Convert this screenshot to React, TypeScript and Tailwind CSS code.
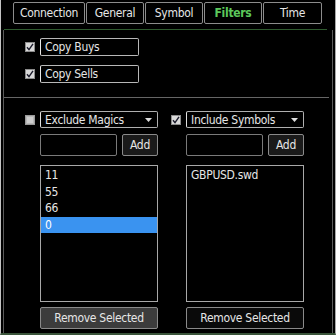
import React from 'react';

const tabs = [
  { label: 'Connection', w: 'w-[72px]' },
  { label: 'General', w: 'w-[58px]' },
  { label: 'Symbol', w: 'w-[58px]' },
  { label: 'Filters', w: 'w-[58px]', active: true },
  { label: 'Time', w: 'w-[59px]' },
];

function CheckBox({ checked }: { checked: boolean }) {
  return (
    <svg width="10" height="10" viewBox="0 0 10 10" className="shrink-0">
      <rect x="0" y="0" width="10" height="10" fill={checked ? '#d9d9d9' : '#b8b8b8'} />
      <rect x="0.5" y="0.5" width="9" height="9" fill="none" stroke={checked ? '#8c8c8c' : '#9a9a9a'} />
      {checked ? (
        <path d="M2 5.2 L4 7.6 L8 1.8" fill="none" stroke="#1a1a2a" strokeWidth="1.4" />
      ) : (
        <rect x="2" y="2" width="6" height="6" fill="#cfcfcf" />
      )}
    </svg>
  );
}

function Dropdown({ label }: { label: string }) {
  return (
    <div className="w-[118px] h-[17px] ml-[5px] border border-[#b0b0b0] border-l-[#e0e0e0] rounded-[2px] flex items-center justify-between pl-[4px] pr-[5px]">
      <span>{label}</span>
      <svg width="7" height="4" viewBox="0 0 7 4">
        <path d="M0 0 L7 0 L3.5 4 Z" fill="#dcdcdc" />
      </svg>
    </div>
  );
}

function FilterColumn({
  checked,
  label,
  items,
  selected,
  filledButton,
}: {
  checked: boolean;
  label: string;
  items: string[];
  selected?: number;
  filledButton?: boolean;
}) {
  return (
    <div className="flex flex-col w-[133px]">
      <div className="flex items-center">
        <CheckBox checked={checked} />
        <Dropdown label={label} />
      </div>
      <div className="pl-[15px] flex flex-col">
        <div className="flex gap-[5px] mt-[6px]">
          <div className="w-[77px] h-[22px] border border-[#7a7a7a] rounded-[2px]" />
          <div className="w-[36px] h-[22px] border border-[#8a8a8a] rounded-[2px] bg-[#1a1a1a] flex items-center justify-center">
            Add
          </div>
        </div>
        <div className="mt-[9px] h-[137px] w-[118px] border border-[#a8a8a8] pt-[1px]">
          {items.map((it, i) => (
            <div
              key={i}
              className={
                'h-[16.6px] flex items-center pl-[4px] ' +
                (i === selected ? 'bg-[#3a93f0] text-white' : '')
              }
            >
              {it}
            </div>
          ))}
        </div>
        <div
          className={
            'mt-[5px] h-[22px] w-[118px] border border-[#8a8a8a] rounded-[2px] flex items-center justify-center ' +
            (filledButton ? 'bg-[#3c3c3c]' : 'bg-[#0a0a0a]')
          }
        >
          Remove Selected
        </div>
      </div>
    </div>
  );
}

export default function App() {
  return (
    <div
      className="w-[336px] h-[335px] bg-black border-l border-r border-l-[#c4c4c4] border-r-[#a8a8a8] border-b-2 border-b-[#3a553a] flex flex-col text-[12px] leading-[16px] tracking-[-0.3px] font-stretch-condensed text-[#e6e6e6] overflow-hidden"
      style={{ fontFamily: '"DejaVu Sans", "Noto Sans", sans-serif' }}
    >
      {/* Tabs */}
      <div className="flex gap-px pt-[2px] pl-[12px]">
        {tabs.map((t) => (
          <div
            key={t.label}
            className={
              t.w +
              ' h-[22px] border border-[#8c8c8c] rounded-[2px] flex items-center justify-center ' +
              (t.active ? 'text-[#5cc85c] font-bold' : '')
            }
          >
            {t.label}
          </div>
        ))}
      </div>
      <div className="mt-[5px] ml-[3px] w-[323px] h-px bg-[#2e5a2e]" />

      {/* Panel */}
      <div className="flex-1 mx-[2px] border-x border-[#5a5a5a] flex flex-col">
        <div className="pt-[8px] pl-[21px] flex flex-col gap-[9px]">
          {['Copy Buys', 'Copy Sells'].map((l) => (
            <div key={l} className="flex items-center">
              <CheckBox checked />
              <div className="ml-[5px] w-[99px] h-[18px] border border-[#b8b8b8] border-l-[#e8e8e8] rounded-[2px] flex items-center pl-[4px]">
                {l}
              </div>
            </div>
          ))}
        </div>
        <div className="mt-[14px] mr-[3px] h-px bg-[#666]" />

        <div className="flex gap-[13px] mt-[13px] pl-[21px]">
          <FilterColumn
            checked={false}
            label="Exclude Magics"
            items={['11', '55', '66', '0']}
            selected={3}
            filledButton
          />
          <FilterColumn checked label="Include Symbols" items={['GBPUSD.swd']} />
        </div>
      </div>
    </div>
  );
}
